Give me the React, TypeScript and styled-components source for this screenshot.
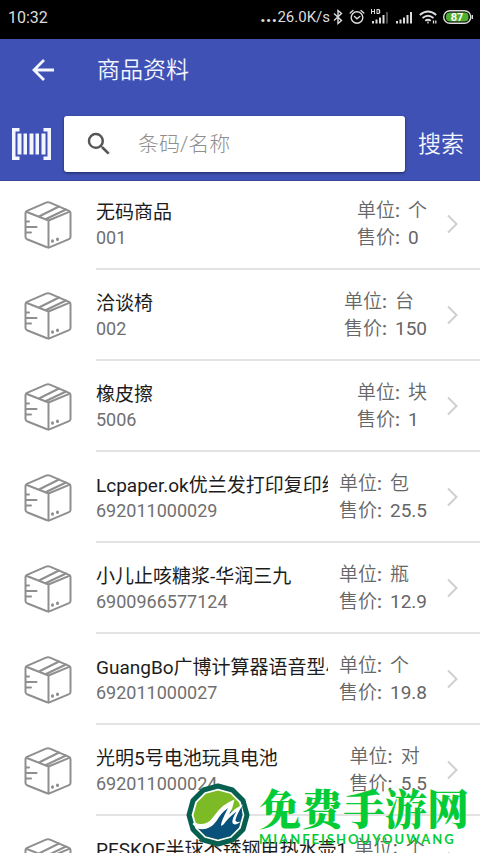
import React from "react";
import styled, { createGlobalStyle } from "styled-components";

const Global = createGlobalStyle`
  * { box-sizing: border-box; }
  body { margin: 0; background: #fff; font-family: Roboto, "Noto Sans CJK SC", sans-serif; }
  button, input { font: inherit; }
`;

const Screen = styled.div`
  position: relative;
  display: flex;
  flex-direction: column;
  height: 100vh;
  overflow: hidden;
  background: #fff;
`;

const StatusBar = styled.div`
  flex: none;
  display: flex;
  align-items: center;
  justify-content: space-between;
  height: 39px;
  padding: 0 7px 5px 8px;
  background: #000;
  color: #dcdcdc;
  font-size: 16px;
`;

const StatusIcons = styled.div`
  display: flex;
  align-items: center;
  gap: 6px;
`;

const Speed = styled.span`
  margin-right: -3px;
  font-size: 15px;
  line-height: 20px;
`;

const Dots = styled.b`
  font-size: 20px;
  line-height: 16px;
`;

const Header = styled.header`
  flex: none;
  background: #3f51b5;
  box-shadow: 0 1px 0 #3f51b5, 0 2px 0 #3a489c;
  color: #f4f6ff;
  z-index: 1;
`;

const TitleBar = styled.div`
  display: flex;
  align-items: center;
  gap: 40px;
  height: 62px;
  padding-left: 29px;
`;

const IconButton = styled.button`
  display: flex;
  padding: 0;
  border: 0;
  background: none;
  color: inherit;
`;

const Title = styled.h1`
  margin: 0;
  padding-top: 2px;
  font-size: 23px;
  line-height: 32px;
  font-weight: 350;
`;

const SearchBar = styled.form`
  display: flex;
  align-items: center;
  height: 78px;
  padding: 7px 16px 0 12px;
`;

const SearchBox = styled.label`
  flex: 1;
  min-width: 0;
  display: flex;
  align-items: center;
  gap: 24px;
  height: 56px;
  margin: 0 13px;
  padding-left: 20px;
  border-radius: 3px;
  background: #fff;
  box-shadow: 0 1px 3px rgba(0, 0, 0, 0.5);
`;

const SearchInput = styled.input`
  flex: 1;
  min-width: 0;
  border: 0;
  outline: 0;
  padding: 0;
  background: none;
  color: #333;
  font-size: 21px;
  font-weight: 300;
  &::placeholder { color: #8f8f8f; opacity: 1; }
`;

const SearchButton = styled(IconButton)`
  padding-top: 2px;
  font-size: 23px;
  line-height: 32px;
  font-weight: 350;
`;

const List = styled.ul`
  flex: 1;
  min-height: 0;
  overflow: hidden;
  margin: 0;
  padding: 0;
  list-style: none;
`;

const Row = styled.li`
  display: flex;
  height: 91px;
  padding-left: 24px;
`;

const Thumb = styled.div`
  flex: none;
  width: 72px;
  padding-top: 22px;
`;

const RowBody = styled.div`
  flex: 1;
  min-width: 0;
  display: flex;
  border-bottom: 2px solid #e3e3e3;
  padding-right: 22px;
`;

const Product = styled.div`
  flex: 1;
  min-width: 0;
  padding-top: 21px;
`;

const Name = styled.div`
  overflow: hidden;
  white-space: nowrap;
  color: #1c1c1c;
  font-size: 19px;
  line-height: 26px;
`;

const Code = styled.div`
  color: #707070;
  font-size: 18px;
  line-height: 24px;
`;

const Facts = styled.dl`
  flex: none;
  margin: 0 20px 0 11px;
  padding-top: 18px;
  color: #666;
  font-size: 19px;
  line-height: 27px;
`;

const Fact = styled.div`
  display: flex;
  gap: 8px;
  dt, dd { margin: 0; }
`;

const FactLabel = styled.dt`
  font-weight: 350;
  &::after { content: ":"; font-weight: 500; }
`;

const FactUnit = styled.dd`
  font-weight: 350;
`;

const ChevronCell = styled.div`
  padding-top: 35px;
  color: #cfcfcf;
  svg { display: block; }
`;

const Watermark = styled.div`
  position: absolute;
  right: 11px;
  bottom: 6px;
  display: flex;
  align-items: center;
  gap: 8px;
  color: #05cc36;
  pointer-events: none;
`;

const BrandName = styled.div`
  font-family: "Noto Serif CJK SC", "Noto Sans CJK SC", serif;
  font-size: 42px;
  line-height: 48px;
  font-weight: 900;
`;

const BrandLatin = styled.div`
  font-family: Lato, sans-serif;
  font-size: 13px;
  line-height: 16px;
  font-weight: 700;
  letter-spacing: 2px;
`;

const products = [
  ["无码商品", "001", "个", "0"],
  ["洽谈椅", "002", "台", "150"],
  ["橡皮擦", "5006", "块", "1"],
  ["Lcpaper.ok优兰发打印复印纸", "692011000029", "包", "25.5"],
  ["小儿止咳糖浆-华润三九", "6900966577124", "瓶", "12.9"],
  ["GuangBo广博计算器语音型小", "692011000027", "个", "19.8"],
  ["光明5号电池玩具电池", "692011000024", "对", "5.5"],
  ["PESKOE半球不锈钢电热水壶1", "692011000031", "个", "89"],
];

const BoxIcon = () => (
  <svg width="48" height="48" viewBox="0 0 48 48" fill="none" stroke="#8f8f8f" strokeWidth="2" strokeLinejoin="round" strokeLinecap="round">
    <path d="M3 9.800 22 1.600q2-.8 4 0L45 9.800q1.500.7 1.500 2.200V36q0 1.500-1.500 2.200L26 46.200q-1.500.7-3 0L3 38.200Q1.500 37.500 1.500 36V12q0-1.500 1.500-2.200Z" />
    <path d="M2.200 10.700 24.500 19.500 45.800 10.700M24.500 19.500V46.500M15 15.500 35 5.500M22 18 42 8.500" />
    <path d="M2 20.500h3M2 26h10.500M2 31.500h5" />
    <path d="M28.500 39.700v.6M33.500 37.900v.6" strokeWidth="3" />
  </svg>
);

const Signal = ({ hd = false }: { hd?: boolean }) => (
  <svg width="18" height="16" viewBox="0 0 18 16" fill="#dcdcdc">
    <path d="M1 12h2v2.500H1zM4.500 10.500h2v4h-2zM8 8.500h2v6H8zM11.500 6h2v8.500h-2z" />
    <path d="M15 3h2v11.500h-2z" opacity={hd ? 0.35 : 1} />
    {hd && <path d="M0 0h1v2h2V0h1v5H3V3H1v2H0zM5.500 0H8l1.200 1v3L8 5H5.500zm1 1v3h1.200V1z" />}
  </svg>
);

const BrandLogo = () => (
  <svg width="66" height="64" viewBox="0 0 66 64">
    <path d="M33 3 47.500 7 58 17.500 62 32 58 46.500 47.500 57 33 61 18.500 57 8 46.500 4 32 8 17.500 18.500 7Z" fill="#fff" stroke="#07604f" strokeWidth="5" strokeLinejoin="round" />
    <path d="M33 7.500 45.300 10.800 54 19.500 57.500 32 54 44.500 45.300 53.200 33 56.500 20.700 53.200 12 44.500 8.500 32 12 19.500 20.700 10.800Z" fill="#7dbb26" />
    <path d="M12 44.500Q24 48 29.500 39 36 28 48 19L45 29 56.500 23.500 57.500 32 54 44.500 45.300 53.200 33 56.500 20.700 53.200Z" fill="#07517a" />
    <path d="M7.500 41q2-2.500 4.500-.5l3 .5q8 1 14-8Q37 21 49.500 16.500 48 25 44 31.500 50 25 58 21.500 52.500 30 50.500 36.500 50 40 56 38.500 49.500 43.500 47.500 40 46.500 36.500 51.500 28.500 43 35 38.500 41.500L36 43Q35.500 39.500 43 25 36 30 31.500 38 24 48.500 12 45.500Z" fill="#fff" />
  </svg>
);

export default function App() {
  return (
    <Screen>
      <Global />
      <StatusBar>
        <span>10:32</span>
        <StatusIcons>
          <Speed><Dots>...</Dots>26.0K/s</Speed>
          <svg width="10" height="16" viewBox="0 0 10 16" fill="none" stroke="#dcdcdc" strokeWidth="1.400">
            <path d="M1 4.500 8.500 11.500 5 14.500V1.500l3.500 3L1 11.500" />
          </svg>
          <svg width="16" height="16" viewBox="0 0 16 16" fill="none" stroke="#dcdcdc" strokeWidth="1.400" strokeLinecap="round">
            <circle cx="8" cy="8.500" r="5.800" />
            <path d="M1.200 4 4 1.500M14.800 4 12 1.500M5.500 7.500 8 9.800 10.800 7.500" />
          </svg>
          <Signal hd />
          <Signal />
          <svg width="18" height="16" viewBox="0 0 18 16" fill="none" stroke="#dcdcdc" strokeWidth="1.800">
            <path d="M.8 6q8.200-7 16.400 0M3.500 9q5.500-4.600 11 0M6.200 11.800q2.800-2.200 5.600 0" />
            <path d="M9 12.500v2M14.500 11.500v3M16.800 11.500v3" strokeWidth="1.300" />
          </svg>
          <svg width="30" height="14" viewBox="0 0 30 14">
            <rect x=".7" y=".7" width="27" height="12.600" rx="6.300" fill="none" stroke="#dcdcdc" strokeWidth="1.400" />
            <path d="M29.300 5v4" stroke="#dcdcdc" strokeWidth="1.400" />
            <rect x="3" y="2.500" width="22.500" height="9" rx="4" fill="#4caf2f" />
            <text x="14" y="11" textAnchor="middle" fontSize="11" fontWeight="700" fill="#fff">87</text>
          </svg>
        </StatusIcons>
      </StatusBar>
      <Header>
        <TitleBar>
          <IconButton aria-label="返回">
            <svg width="28" height="28" viewBox="0 0 28 28" fill="none" stroke="currentColor" strokeWidth="2.800">
              <path d="M25 14H5.500M15 4 5 14l10 10" />
            </svg>
          </IconButton>
          <Title>商品资料</Title>
        </TitleBar>
        <SearchBar onSubmit={(e) => e.preventDefault()}>
          <IconButton type="button" aria-label="扫描条码">
            <svg width="39" height="32" viewBox="0 0 39 32" fill="currentColor">
              <path d="M0 0h7.500v3.500H3.500v25h4V32H0zM39 0h-7.500v3.500h4v25h-4V32H39zM5.500 5.500h4v21h-4zM11.500 5.500h3.500v21h-3.500zM17.500 5.500h4v21h-4zM23.500 5.500h3.500v21h-3.500zM29.500 5.500h4v21h-4z" />
            </svg>
          </IconButton>
          <SearchBox>
            <svg width="30" height="30" viewBox="0 0 24 24" fill="#555">
              <path d="M15.500 14h-.79l-.28-.27A6.470 6.470 0 0 0 16 9.500 6.500 6.500 0 1 0 9.500 16c1.610 0 3.090-.59 4.230-1.570l.27.28v.79l5 4.990L20.490 19l-4.990-5zm-6 0C7.010 14 5 11.990 5 9.500S7.010 5 9.500 5 14 7.010 14 9.500 11.990 14 9.500 14z" />
            </svg>
            <SearchInput type="text" placeholder="条码/名称" aria-label="条码/名称" />
          </SearchBox>
          <SearchButton type="submit">搜索</SearchButton>
        </SearchBar>
      </Header>
      <List>
        {products.map(([name, code, unit, price]) => (
          <Row key={name}>
            <Thumb><BoxIcon /></Thumb>
            <RowBody>
              <Product>
                <Name>{name}</Name>
                <Code>{code}</Code>
              </Product>
              <Facts>
                <Fact><FactLabel>单位</FactLabel><FactUnit>{unit}</FactUnit></Fact>
                <Fact><FactLabel>售价</FactLabel><dd>{price}</dd></Fact>
              </Facts>
              <ChevronCell>
                <svg width="11" height="20" viewBox="0 0 11 20" fill="none" stroke="currentColor" strokeWidth="2">
                  <path d="M1 1.500 9.500 10 1 18.500" />
                </svg>
              </ChevronCell>
            </RowBody>
          </Row>
        ))}
      </List>
      <Watermark>
        <BrandLogo />
        <div>
          <BrandName>免费手游网</BrandName>
          <BrandLatin>MIANFEISHOUYOUWANG</BrandLatin>
        </div>
      </Watermark>
    </Screen>
  );
}
